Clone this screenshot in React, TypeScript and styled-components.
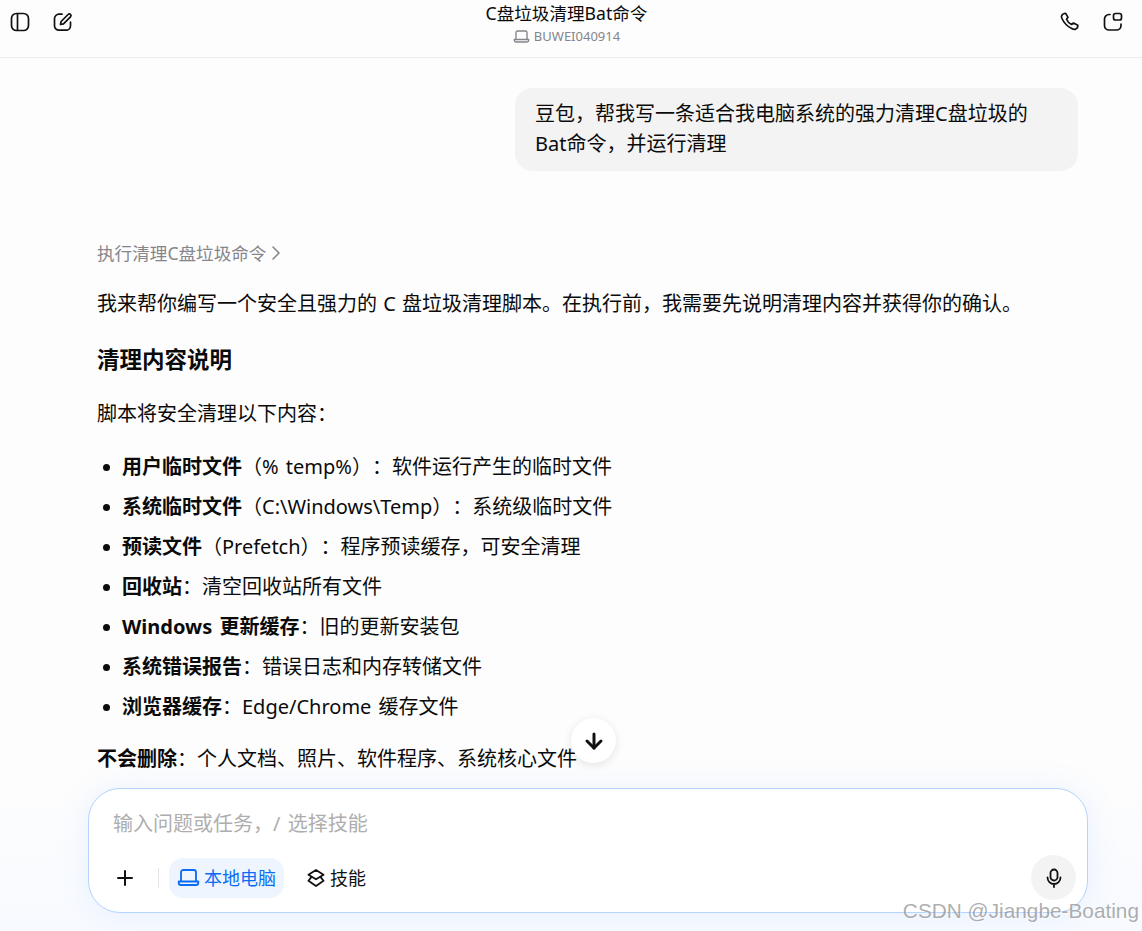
import styled, { createGlobalStyle } from 'styled-components'
import { ArrowDown, Plus } from 'lucide-react'

const GlobalStyle = createGlobalStyle`
  html, body {
    margin: 0;
    padding: 0;
    background: #fdfdfd;
    font-family: "Noto Sans", "Noto Sans CJK SC", sans-serif;
    color: #0b0b0b;
    text-spacing-trim: space-all;
  }
  * {
    box-sizing: border-box;
  }
`

const Page = styled.div`
  position: relative;
  width: 1142px;
  height: 931px;
  overflow: hidden;
  display: flex;
  flex-direction: column;
  background: #fdfdfd;
`

const Header = styled.header`
  height: 58px;
  flex: none;
  padding: 0 19px 0 10px;
  display: grid;
  grid-template-columns: 1fr auto 1fr;
  border-bottom: 1px solid #ececec;
`

const IconGroup = styled.div<{ $end?: boolean }>`
  display: flex;
  align-items: flex-start;
  padding-top: 12px;
  gap: 23px;
  justify-content: ${(props) => (props.$end ? 'flex-end' : 'flex-start')};
  color: #111;
`

const TitleBlock = styled.div`
  display: flex;
  flex-direction: column;
  align-items: center;
  padding-top: 1px;
`

const Title = styled.div`
  font-size: 17.6px;
  line-height: 24px;
`

const Device = styled.div`
  display: flex;
  align-items: center;
  gap: 4px;
  font-size: 13px;
  line-height: 20px;
  margin-top: 1px;
  color: #85858b;
`

const Main = styled.main`
  flex: 1;
  min-height: 0;
  overflow: hidden;
  padding: 30px 64px 0 97px;
  display: flex;
  flex-direction: column;
`

const Bubble = styled.div`
  align-self: flex-end;
  width: 563px;
  padding: 11px 20px 12px;
  background: #f3f3f3;
  border-radius: 18px;
  font-size: 20px;
  line-height: 30px;
`

const ThinkingLink = styled.div`
  margin-top: 67px;
  display: flex;
  align-items: center;
  gap: 4px;
  font-size: 17.6px;
  line-height: 30px;
  color: #85858b;
`

const Paragraph = styled.p<{ $top: number }>`
  margin: ${(props) => props.$top}px 0 0;
  font-size: 20px;
  line-height: 30px;
  word-spacing: 1px;
`

const SectionTitle = styled.h3`
  margin: 26px 0 0;
  font-size: 22.5px;
  line-height: 30px;
  font-weight: 700;
`

const BulletList = styled.ul`
  margin: 23px 0 0;
  padding: 0 0 0 25px;
  list-style: none;
`

const BulletItem = styled.li`
  position: relative;
  height: 40px;
  font-size: 20px;
  line-height: 30px;
  word-spacing: 2px;
  &::before {
    content: '';
    position: absolute;
    left: -19px;
    top: 12px;
    width: 7px;
    height: 7px;
    border-radius: 50%;
    background: #0b0b0b;
  }
`

const Strong = styled.strong`
  font-weight: 700;
`

const FadeOverlay = styled.div`
  position: absolute;
  left: 0;
  right: 0;
  bottom: 0;
  height: 163px;
  display: flex;
  justify-content: flex-start;
  align-items: flex-end;
  padding: 0 0 18px 88px;
  background: linear-gradient(to bottom, rgba(253, 253, 253, 0) 0, #fdfdfd 14px, #f7faff 100%);
`

const ScrollDown = styled.button`
  position: absolute;
  left: 571px;
  top: 718px;
  width: 45px;
  height: 45px;
  border: none;
  border-radius: 50%;
  background: #fff;
  box-shadow: 0 2px 10px rgba(0, 0, 0, 0.1);
  color: #111;
  display: flex;
  align-items: center;
  justify-content: center;
  padding: 0;
`

const Composer = styled.div`
  width: 1000px;
  height: 125px;
  padding: 21px 11px 12px 24px;
  background: #fff;
  border: 1px solid #b4d3fd;
  border-radius: 32px;
  box-shadow: 0 0 30px rgba(70, 140, 255, 0.1);
  display: flex;
  flex-direction: column;
  justify-content: space-between;
`

const Placeholder = styled.div`
  font-size: 20px;
  line-height: 28px;
  word-spacing: 2px;
  color: #aeaeae;
`

const Toolbar = styled.div`
  display: flex;
  align-items: center;
`

const PlusButton = styled.div`
  width: 24px;
  height: 24px;
  color: #111;
  display: flex;
  align-items: center;
  justify-content: center;
`

const Divider = styled.div`
  width: 1px;
  height: 20px;
  margin: 0 10px 0 21px;
  background: #e4e4e4;
`

const ToolChip = styled.div<{ $active?: boolean }>`
  height: 40px;
  padding: 0 8px;
  border-radius: 14px;
  display: flex;
  align-items: center;
  gap: 4px;
  font-size: 18px;
  line-height: 38px;
  background: ${(props) => (props.$active ? '#eef5ff' : 'transparent')};
  color: ${(props) => (props.$active ? '#0a6cf5' : '#111')};
  margin-right: 14px;
`

const MicButton = styled.div`
  margin-left: auto;
  width: 45px;
  height: 45px;
  border-radius: 50%;
  background: #f3f3f3;
  color: #111;
  display: flex;
  align-items: center;
  justify-content: center;
`

const Watermark = styled.div`
  position: absolute;
  right: 3px;
  bottom: 7px;
  font-family: "Liberation Sans", sans-serif;
  font-size: 20.8px;
  line-height: 26px;
  color: rgba(120, 120, 120, 0.6);
  text-shadow: 1px 1px 0 rgba(255, 255, 255, 0.6);
`

const SidebarIcon = () => (
  <svg width="20" height="20" viewBox="0 0 20 20" fill="none" stroke="currentColor" strokeWidth="1.7">
    <rect x="1.5" y="1.5" width="17" height="17" rx="5" />
    <path d="M7.5 1.5v17" />
  </svg>
)

const EditIcon = () => (
  <svg width="20" height="20" viewBox="0 0 20 20" fill="none" stroke="currentColor" strokeWidth="1.7" strokeLinecap="round" strokeLinejoin="round">
    <path d="M9 2.2H6a4.5 4.5 0 0 0-4.5 4.5v7A4.5 4.5 0 0 0 6 18.2h7a4.5 4.5 0 0 0 4.5-4.500V10" />
    <path d="M7.5 12.5l.6-3 7-7a1.6 1.6 0 0 1 2.4 2.3l-7 7z" />
  </svg>
)

const PhoneIcon = () => (
  <svg width="20" height="20" viewBox="0 0 20 20" fill="none" stroke="currentColor" strokeWidth="1.7" strokeLinecap="round" strokeLinejoin="round">
    <path d="M4.500 1.500l1.200-.2 2.300 4-1.500 2c.9 2.200 2.800 4.100 5 5.200l2-1.500 4.300 2.300c.2 1.500-.6 3-2.100 3.800-1 .4-2.500.2-4-.6C7.500 14.500 3.500 10 1.700 6 1 4 2 2.200 4.500 1.500z" />
  </svg>
)

const NewChatIcon = () => (
  <svg width="20" height="20" viewBox="0 0 20 20" fill="none" stroke="currentColor" strokeWidth="1.7" strokeLinecap="round" strokeLinejoin="round">
    <path d="M7 2.500H6a4.500 4.500 0 0 0-4.500 4.500v6.500A4.500 4.500 0 0 0 6 18h7.500a4.500 4.500 0 0 0 4.500-4.500V12" />
    <rect x="10.500" y="1.500" width="8" height="6.500" rx="2" />
  </svg>
)

const LaptopIcon = ({ size }: { size: number }) => (
  <svg width={size} height={size} viewBox="0 0 20 20" fill="none" stroke="currentColor" strokeWidth="1.6" strokeLinecap="round" strokeLinejoin="round">
    <path d="M3.500 13V5.500a2 2 0 0 1 2-2h9a2 2 0 0 1 2 2V13" />
    <path d="M1.500 13.500h17v1a2 2 0 0 1-2 2h-13a2 2 0 0 1-2-2z" />
  </svg>
)

const LayersIcon = () => (
  <svg width="20" height="20" viewBox="0 0 18 18" fill="none" stroke="currentColor" strokeWidth="1.6" strokeLinejoin="round">
    <path d="M9 1.800l6.800 4.200L9 10.200 2.200 6z" />
    <path d="M5 8l-2.800 3.500L9 16.200l6.800-4.700L13 8" />
  </svg>
)

const MicIcon = () => (
  <svg width="20" height="20" viewBox="0 0 20 20" fill="none" stroke="currentColor" strokeWidth="1.8" strokeLinecap="round">
    <rect x="6.500" y="1.500" width="7" height="11" rx="3.500" />
    <path d="M3.500 9.500a6.500 6.500 0 0 0 13 0M10 16v3" />
  </svg>
)

const ChevronIcon = () => (
  <svg width="12" height="16" viewBox="0 0 12 16" fill="none" stroke="currentColor" strokeWidth="1.5" strokeLinecap="round" strokeLinejoin="round">
    <path d="M3 2l6 6-6 6" />
  </svg>
)

const items = [
  { name: '用户临时文件', rest: '（% temp%）：软件运行产生的临时文件' },
  { name: '系统临时文件', rest: '（C:\\Windows\\Temp）：系统级临时文件' },
  { name: '预读文件', rest: '（Prefetch）：程序预读缓存，可安全清理' },
  { name: '回收站', rest: '：清空回收站所有文件' },
  { name: 'Windows 更新缓存', rest: '：旧的更新安装包' },
  { name: '系统错误报告', rest: '：错误日志和内存转储文件' },
  { name: '浏览器缓存', rest: '：Edge/Chrome 缓存文件' }
]

export default function App() {
  return (
    <Page>
      <GlobalStyle />
      <Header>
        <IconGroup>
          <SidebarIcon />
          <EditIcon />
        </IconGroup>
        <TitleBlock>
          <Title>C盘垃圾清理Bat命令</Title>
          <Device>
            <LaptopIcon size={17} />
            BUWEI040914
          </Device>
        </TitleBlock>
        <IconGroup $end>
          <PhoneIcon />
          <NewChatIcon />
        </IconGroup>
      </Header>
      <Main>
        <Bubble>豆包，帮我写一条适合我电脑系统的强力清理C盘垃圾的Bat命令，并运行清理</Bubble>
        <ThinkingLink>
          执行清理C盘垃圾命令
          <ChevronIcon />
        </ThinkingLink>
        <Paragraph $top={21}>我来帮你编写一个安全且强力的 C 盘垃圾清理脚本。在执行前，我需要先说明清理内容并获得你的确认。</Paragraph>
        <SectionTitle>清理内容说明</SectionTitle>
        <Paragraph $top={24}>脚本将安全清理以下内容：</Paragraph>
        <BulletList>
          {items.map((item) => (
            <BulletItem key={item.name}>
              <Strong>{item.name}</Strong>
              {item.rest}
            </BulletItem>
          ))}
        </BulletList>
        <Paragraph $top={12}>
          <Strong>不会删除</Strong>：个人文档、照片、软件程序、系统核心文件
        </Paragraph>
      </Main>
      <FadeOverlay>
        <Composer>
          <Placeholder>输入问题或任务，/ 选择技能</Placeholder>
          <Toolbar>
            <PlusButton>
              <Plus size={24} strokeWidth={2} />
            </PlusButton>
            <Divider />
            <ToolChip $active>
              <LaptopIcon size={23} />
              本地电脑
            </ToolChip>
            <ToolChip>
              <LayersIcon />
              技能
            </ToolChip>
            <MicButton>
              <MicIcon />
            </MicButton>
          </Toolbar>
        </Composer>
      </FadeOverlay>
      <ScrollDown>
        <ArrowDown size={24} strokeWidth={3} />
      </ScrollDown>
      <Watermark>CSDN @Jiangbe-Boating</Watermark>
    </Page>
  )
}
